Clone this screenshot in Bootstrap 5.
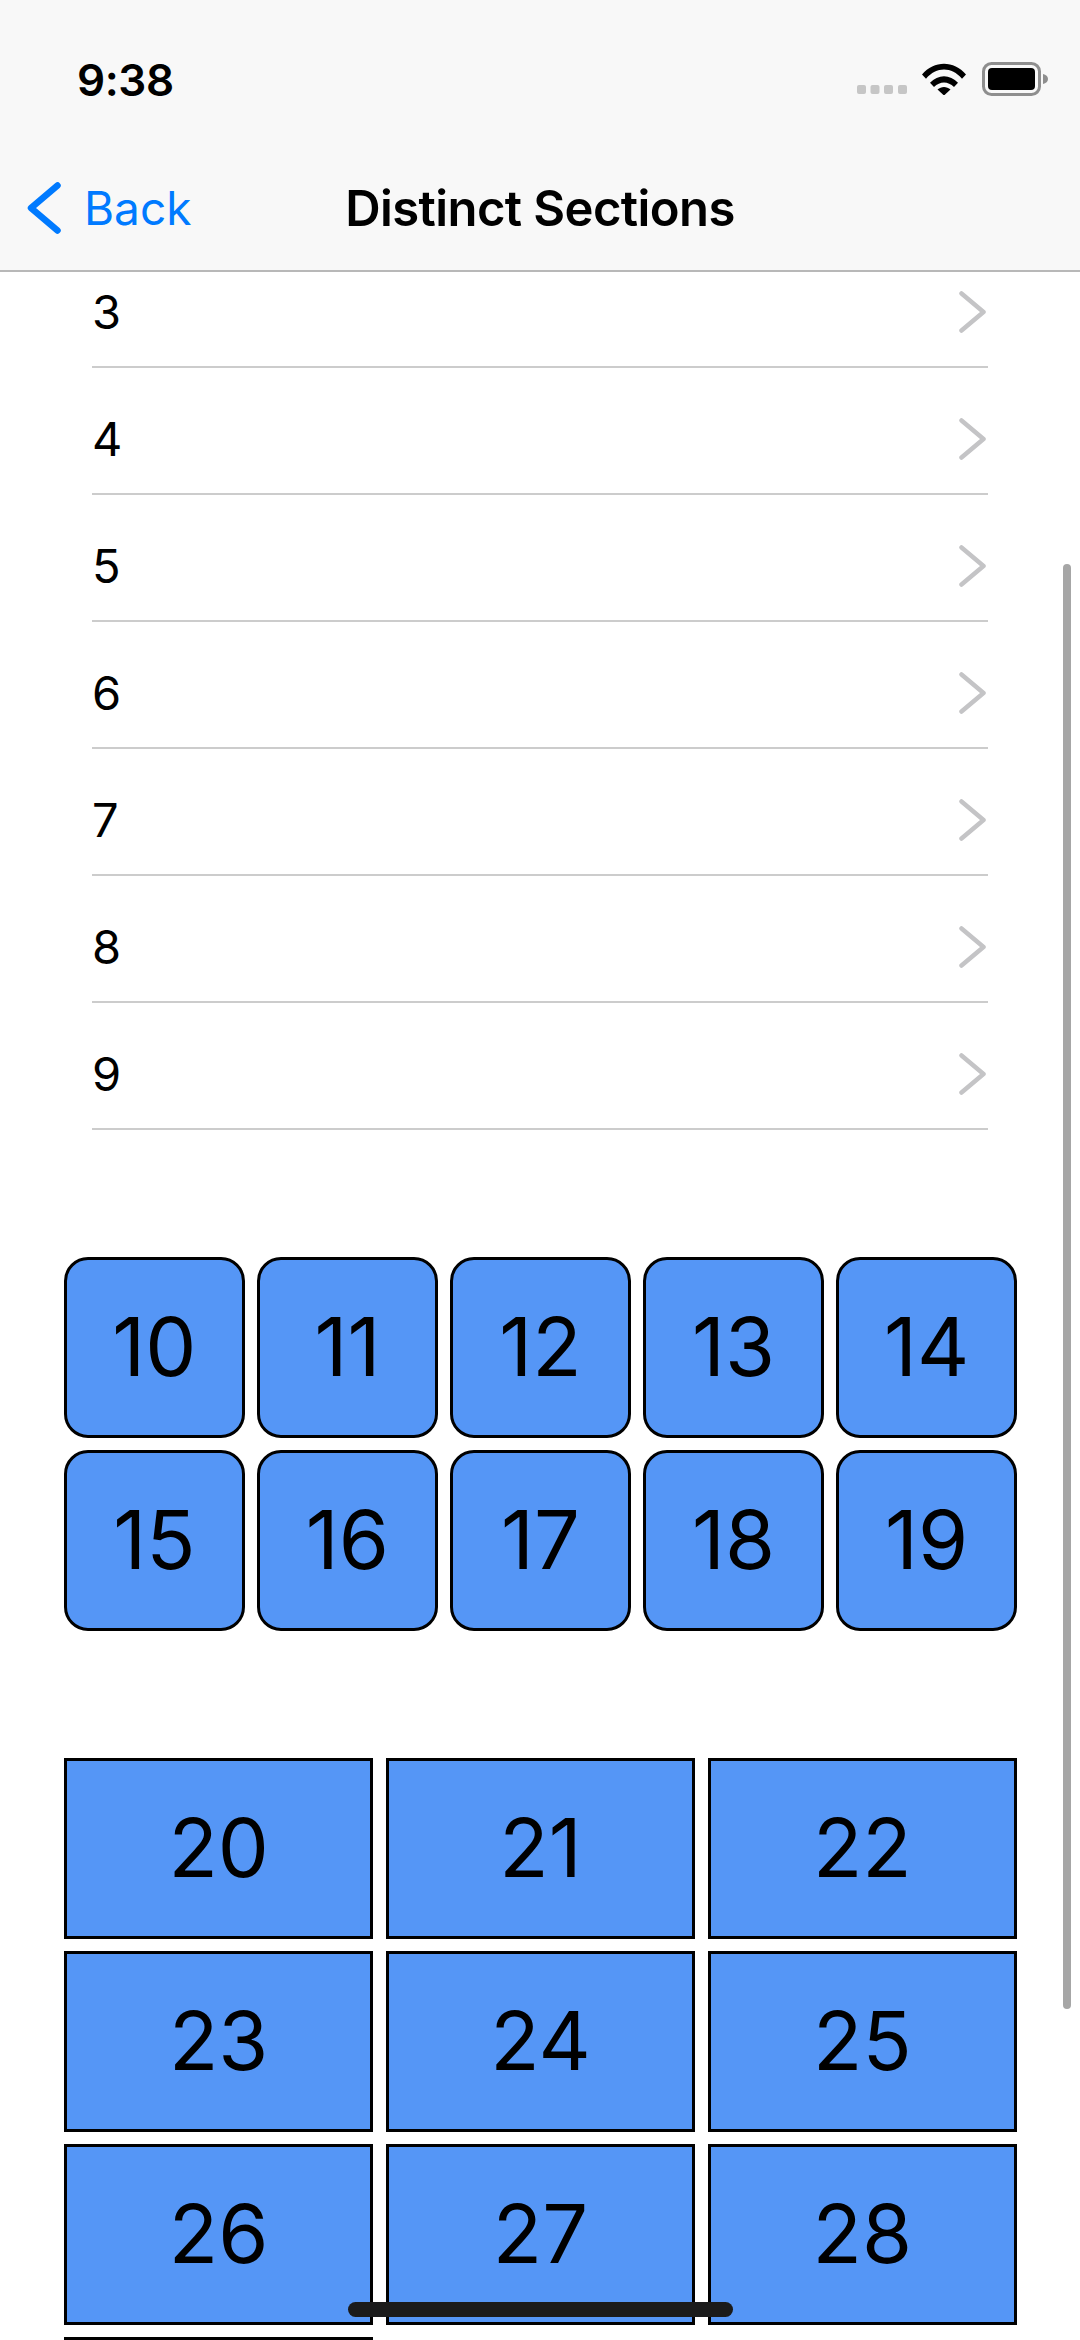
<!DOCTYPE html>
<html lang="en">
<head>
    <meta charset="UTF-8">
    <meta name="viewport" content="width=device-width, initial-scale=1.0">
    <title>Distinct Sections</title>
    <link href="https://cdn.jsdelivr.net/npm/bootstrap@5.3.0/dist/css/bootstrap.min.css" rel="stylesheet">
    <style>
        body { font-family: Inter, "Liberation Sans", sans-serif; color: #000; background: #fff; }
        .phone { width: 1080px; height: 2340px; }
        .top-bar { height: 272px; background: #f8f8f8; border-bottom: 2px solid #b8b8b8; z-index: 2; }
        .status-row { height: 147px; padding: 0 30px 0 77px; }
        .clock { font-size: 44px; font-weight: 600; letter-spacing: -.4px; line-height: 1; margin-top: 13px; }
        .status-icons { margin-top: 11px; }
        .title-row { height: 124px; }
        .back-link { left: 27px; top: 35px; gap: 23px; color: #007aff; font-size: 46px; line-height: 1; text-decoration: none; }
        .nav-title { font-size: 49px; font-weight: 600; letter-spacing: -.6px; line-height: 1; margin-top: 37px; }
        .scroller { height: 2068px; }
        .rows { margin: -31px 92px 0 92px; width: 896px; }
        .rows .list-group-item, .rows .list-group-item:last-child { height: 127px; padding: 16px 2px 0 0; font-size: 47px; background: transparent; color: #000; border-color: #cccccc; border-width: 0 0 2px; line-height: 1; }
        .tiles { display: grid; gap: 12.5px; width: 953px; margin-left: 64px; }
        .tiles-five { grid-template-columns: repeat(5, 1fr); margin-top: 127px; }
        .tiles-three { grid-template-columns: repeat(3, 1fr); margin-top: 127.3px; }
        .tile { height: 180.6px; background: #5596f6; border: 3px solid #000; font-size: 81px; line-height: 1; }
        .tiles-five .tile { border-radius: 24px; }
        .scroll-thumb { left: 1063px; top: 564px; width: 8px; height: 1445px; background: #a6a6a6; border-radius: 4px; }
        .home-bar { left: 348px; top: 2302px; width: 385px; height: 15px; background: #1b1b1b; border-radius: 8px; }
    </style>
</head>
<body class="m-0">
    <div class="phone position-relative overflow-hidden">
        <header class="top-bar position-relative">
            <div class="status-row d-flex justify-content-between align-items-center">
                <div class="clock">9:38</div>
                <div class="status-icons d-flex align-items-center">
                    <svg width="50" height="10" viewBox="0 0 50 10" class="me-3" style="margin-top:22px"><g fill="#c6c6c6"><rect x="0" y="0" width="9" height="9" rx="2"/><rect x="13.5" y="0" width="9" height="9" rx="2"/><rect x="27" y="0" width="9" height="9" rx="2"/><rect x="41" y="0" width="9" height="9" rx="2"/></g></svg>
                    <svg width="44" height="32" viewBox="0 0 44 32" class="me-3" style="margin-left:-1px"><path d="M0 11.5C12-3 32-3 44 11.5l-4 4.2C29.500 3.500 14.500 3.500 4 15.700z"/><path d="M8 19.800c8-8.800 20-8.800 28 0l-4 4.200c-6-6-14-6-20 0z"/><path d="M15.500 26.500c3.800-3.400 9.200-3.400 13 0L22 32.500z"/></svg>
                    <svg width="68" height="34" viewBox="0 0 68 34"><rect x="1.500" y="1.500" width="56" height="31" rx="8" fill="none" stroke="#8e8e8e" stroke-width="3"/><rect x="6" y="6" width="47" height="22" rx="4"/><path d="M61 12c3 .6 5 2.500 5 5s-2 4.400-5 5z" fill="#8e8e8e"/></svg>
                </div>
            </div>
            <div class="title-row position-relative d-flex justify-content-center">
                <a class="back-link position-absolute d-flex align-items-center" href="#">
                    <svg width="34" height="52" viewBox="0 0 34 52"><path d="M30.500 3.500L4 26l26.500 22.500" fill="none" stroke="#007aff" stroke-width="6.500" stroke-linecap="round" stroke-linejoin="round"/></svg>
                    <span>Back</span>
                </a>
                <div class="nav-title">Distinct Sections</div>
            </div>
        </header>

        <main class="scroller overflow-hidden">
            <ul class="rows list-group list-group-flush">
                <li class="list-group-item d-flex justify-content-between align-items-center">3<svg width="27" height="42" viewBox="0 0 27 42"><path d="M2.500 2.500L24.500 21L2.500 39.500" fill="none" stroke="#c4c4c6" stroke-width="4.500" stroke-linecap="round" stroke-linejoin="round"/></svg></li>
                <li class="list-group-item d-flex justify-content-between align-items-center">4<svg width="27" height="42" viewBox="0 0 27 42"><path d="M2.500 2.500L24.500 21L2.500 39.500" fill="none" stroke="#c4c4c6" stroke-width="4.500" stroke-linecap="round" stroke-linejoin="round"/></svg></li>
                <li class="list-group-item d-flex justify-content-between align-items-center">5<svg width="27" height="42" viewBox="0 0 27 42"><path d="M2.500 2.500L24.500 21L2.500 39.500" fill="none" stroke="#c4c4c6" stroke-width="4.500" stroke-linecap="round" stroke-linejoin="round"/></svg></li>
                <li class="list-group-item d-flex justify-content-between align-items-center">6<svg width="27" height="42" viewBox="0 0 27 42"><path d="M2.500 2.500L24.500 21L2.500 39.500" fill="none" stroke="#c4c4c6" stroke-width="4.500" stroke-linecap="round" stroke-linejoin="round"/></svg></li>
                <li class="list-group-item d-flex justify-content-between align-items-center">7<svg width="27" height="42" viewBox="0 0 27 42"><path d="M2.500 2.500L24.500 21L2.500 39.500" fill="none" stroke="#c4c4c6" stroke-width="4.500" stroke-linecap="round" stroke-linejoin="round"/></svg></li>
                <li class="list-group-item d-flex justify-content-between align-items-center">8<svg width="27" height="42" viewBox="0 0 27 42"><path d="M2.500 2.500L24.500 21L2.500 39.500" fill="none" stroke="#c4c4c6" stroke-width="4.500" stroke-linecap="round" stroke-linejoin="round"/></svg></li>
                <li class="list-group-item d-flex justify-content-between align-items-center">9<svg width="27" height="42" viewBox="0 0 27 42"><path d="M2.500 2.500L24.500 21L2.500 39.500" fill="none" stroke="#c4c4c6" stroke-width="4.500" stroke-linecap="round" stroke-linejoin="round"/></svg></li>
            </ul>

            <div class="tiles tiles-five">
                <div class="tile d-flex align-items-center justify-content-center">10</div>
                <div class="tile d-flex align-items-center justify-content-center">11</div>
                <div class="tile d-flex align-items-center justify-content-center">12</div>
                <div class="tile d-flex align-items-center justify-content-center">13</div>
                <div class="tile d-flex align-items-center justify-content-center">14</div>
                <div class="tile d-flex align-items-center justify-content-center">15</div>
                <div class="tile d-flex align-items-center justify-content-center">16</div>
                <div class="tile d-flex align-items-center justify-content-center">17</div>
                <div class="tile d-flex align-items-center justify-content-center">18</div>
                <div class="tile d-flex align-items-center justify-content-center">19</div>
            </div>

            <div class="tiles tiles-three">
                <div class="tile d-flex align-items-center justify-content-center">20</div>
                <div class="tile d-flex align-items-center justify-content-center">21</div>
                <div class="tile d-flex align-items-center justify-content-center">22</div>
                <div class="tile d-flex align-items-center justify-content-center">23</div>
                <div class="tile d-flex align-items-center justify-content-center">24</div>
                <div class="tile d-flex align-items-center justify-content-center">25</div>
                <div class="tile d-flex align-items-center justify-content-center">26</div>
                <div class="tile d-flex align-items-center justify-content-center">27</div>
                <div class="tile d-flex align-items-center justify-content-center">28</div>
                <div class="tile"></div>
            </div>
        </main>

        <div class="scroll-thumb position-absolute"></div>
        <div class="home-bar position-absolute"></div>
    </div>
    <script src="https://cdn.jsdelivr.net/npm/bootstrap@5.3.0/dist/js/bootstrap.bundle.min.js"></script>
</body>
</html>
